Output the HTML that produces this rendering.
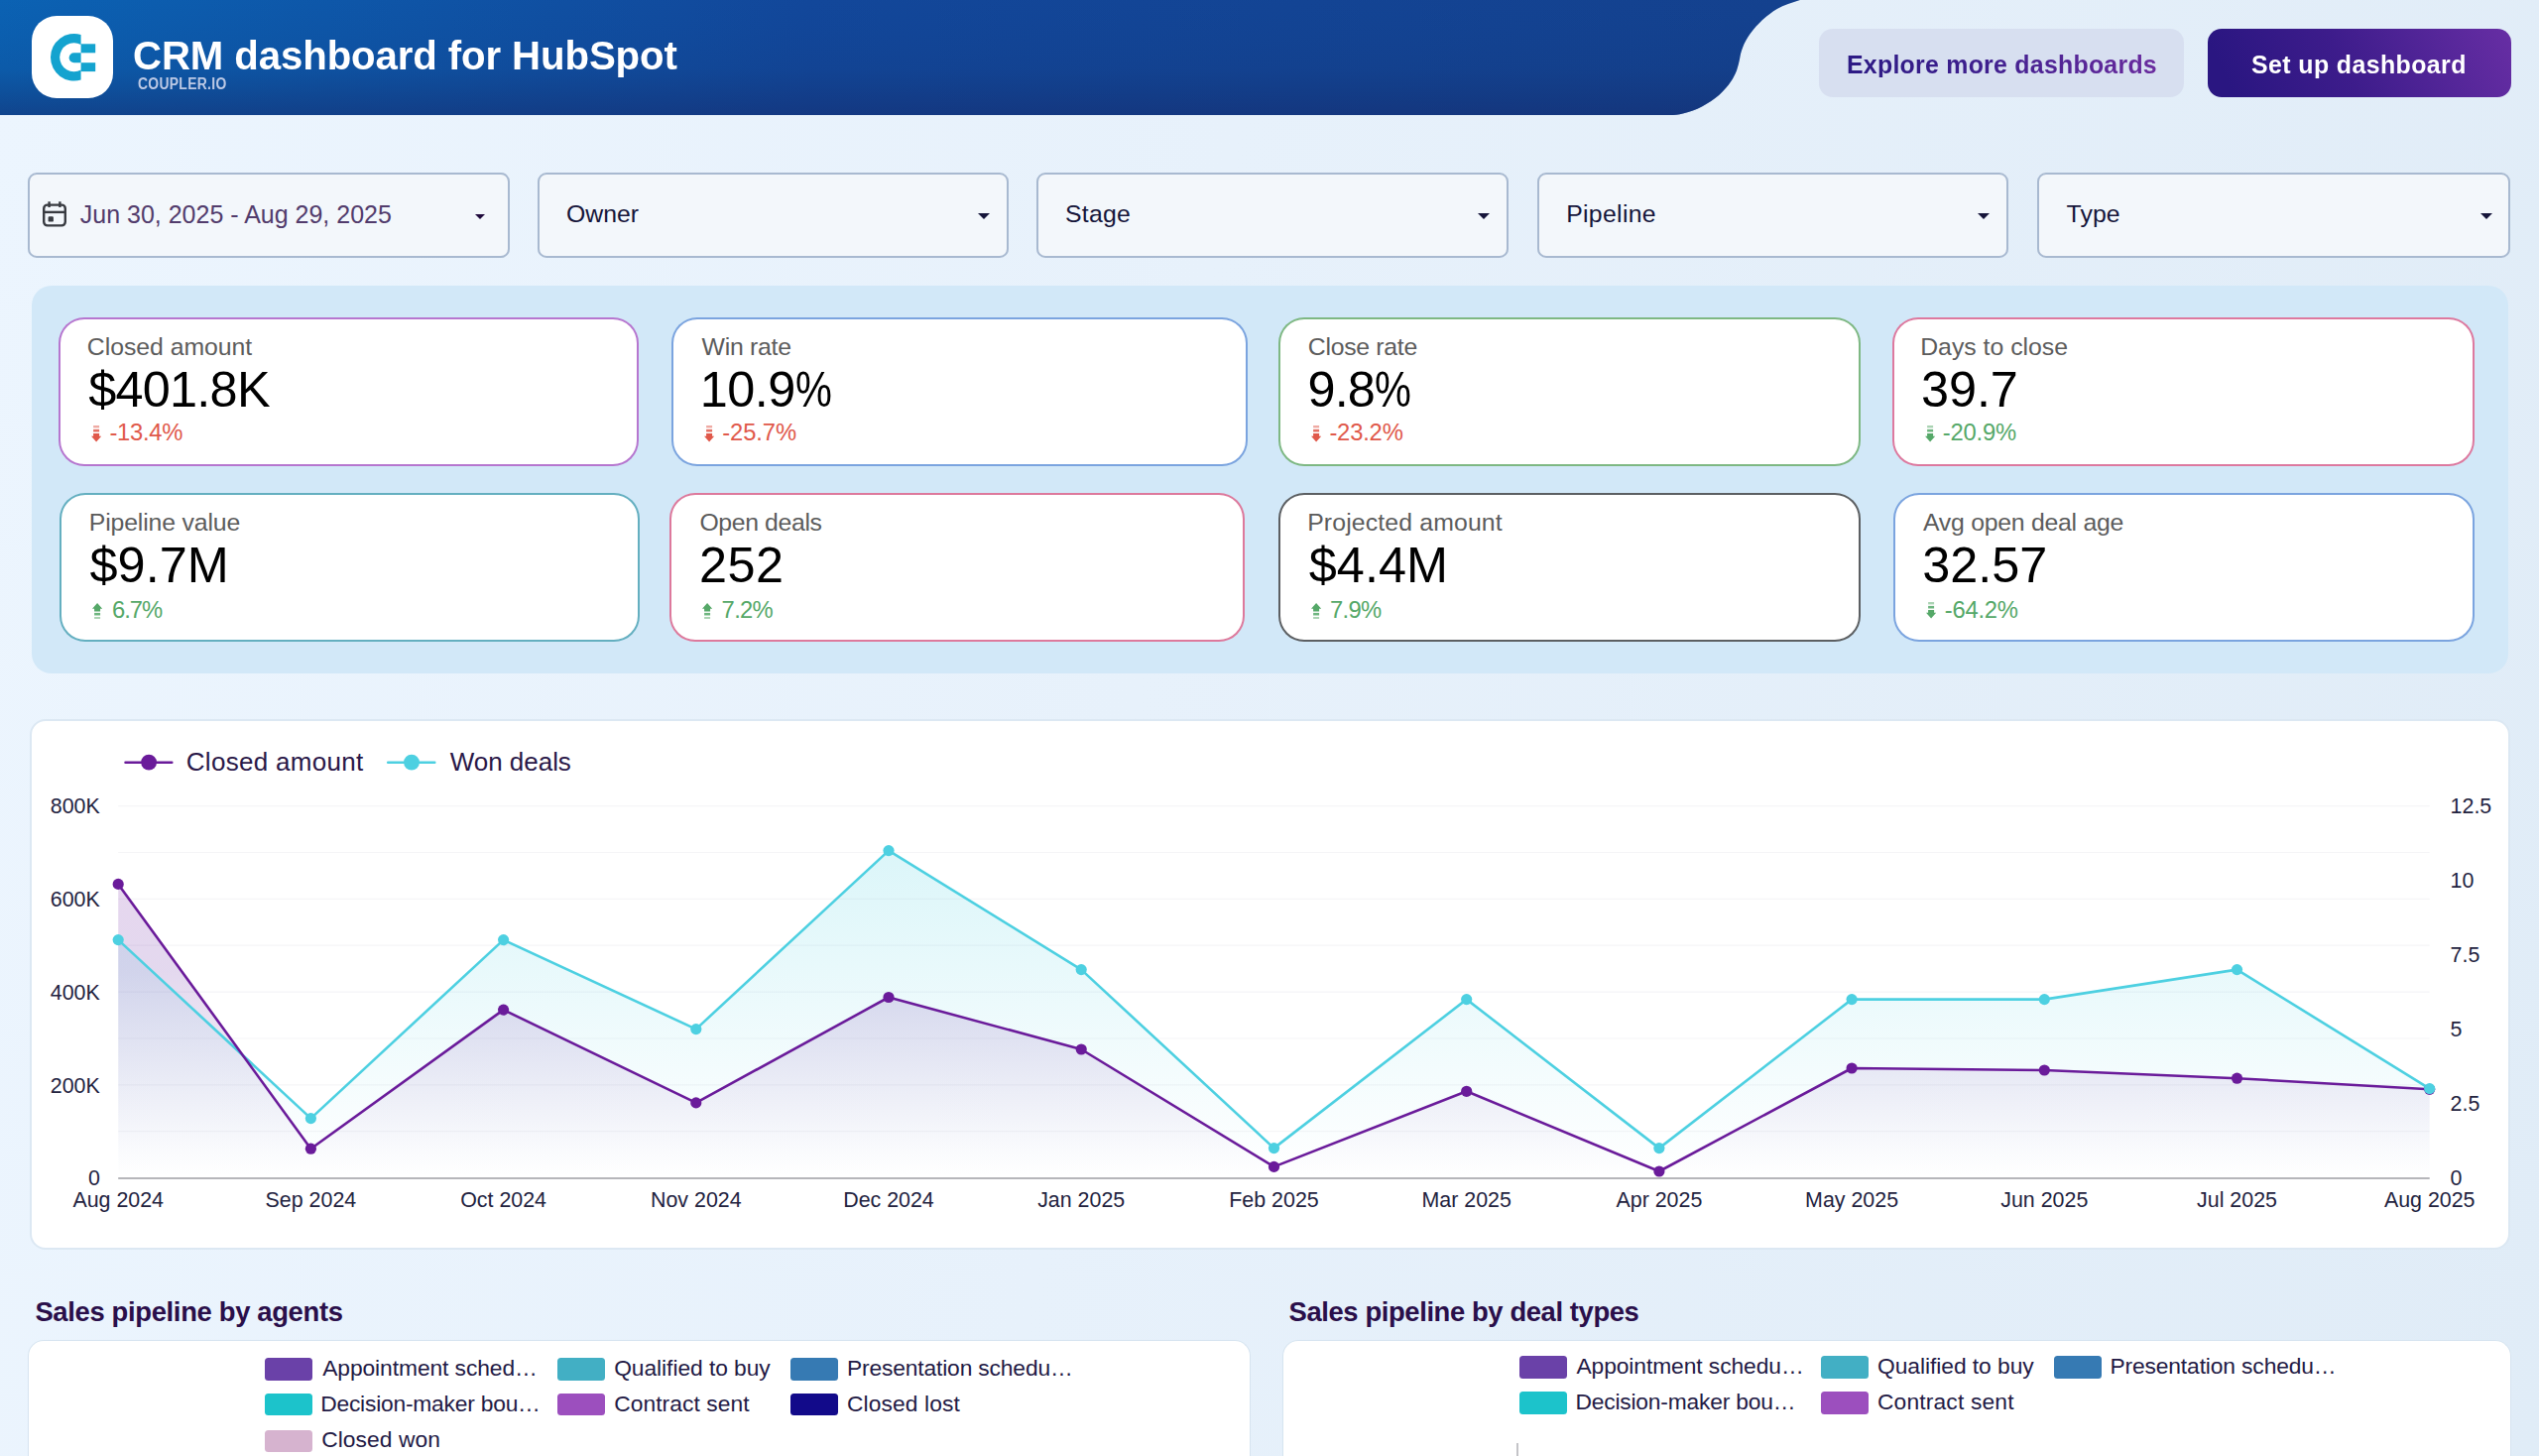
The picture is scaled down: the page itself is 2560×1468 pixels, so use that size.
<!DOCTYPE html>
<html lang="en">
<head>
<meta charset="utf-8">
<title>CRM dashboard for HubSpot</title>
<style>
*{box-sizing:border-box;margin:0;padding:0}
html,body{width:2560px;height:1468px;overflow:hidden}
body{position:relative;font-family:"Liberation Sans",sans-serif;background:linear-gradient(100deg,#ecf5fe 0%,#e7f1fb 45%,#e0ecf7 100%);color:#1a1a3a}
.t{position:absolute;white-space:nowrap;line-height:1}
#hdr{position:absolute;left:0;top:0;width:1840px;height:117px}
#logo{position:absolute;left:31.5px;top:15.5px;width:82px;height:83px;border-radius:25px;background:#fff}
#logo svg{position:absolute;left:0;top:0}
.btn{position:absolute;top:28.5px;height:69.5px;border-radius:14px}
.flt{position:absolute;top:174px;height:86px;border:2px solid #a8b9d0;border-radius:9px;background:#f3f7fb}
.arr{position:absolute;top:214.5px;width:0;height:0;border-left:6px solid transparent;border-right:6px solid transparent;border-top:6.5px solid #15153a}
.fl{color:#15153a}
#kpi{position:absolute;left:31.5px;top:288px;width:2497px;height:390.5px;border-radius:20px;background:#d2e8f8}
.card{position:absolute;background:#fff;border:2px solid #999;border-radius:26px}
.kl{color:#5c5c5c}
.kv{color:#000}
.pc{display:inline-block;transform:scaleX(0.823);transform-origin:0 50%;margin-right:-0.157em}
.ki{position:absolute;width:10.2px;height:16.4px}
.red{color:#e0584a;fill:#e0584a}.grn{color:#55a868;fill:#55a868}
#chart{position:absolute;left:30px;top:725px;width:2501px;height:534.5px;background:#fff;border:2px solid #dce8f3;border-radius:16px}
#csvg{position:absolute;left:0;top:700px;width:2560px;height:580px}
#csvg text{font-family:"Liberation Sans",sans-serif}
.cl{color:#2a1848}
.sec{position:absolute;background:#fff;border:1px solid #d6e4f0;border-radius:16px 16px 0 0;border-bottom:none}
.h2{font-weight:bold;color:#2a0f4a}
.sw{position:absolute;width:48px;height:22.6px;border-radius:3.5px}
.lg{color:#231a45}
</style>
</head>
<body>
<!-- HEADER -->
<svg id="hdr" viewBox="0 0 1840 117">
<defs>
<linearGradient id="hg" x1="0" y1="0" x2="1" y2="0"><stop offset="0" stop-color="#0b62b3"/><stop offset="0.45" stop-color="#12479a"/><stop offset="1" stop-color="#14418e"/></linearGradient>
<linearGradient id="hv" x1="0" y1="0" x2="0" y2="1"><stop offset="0" stop-color="#0a3a8a" stop-opacity="0"/><stop offset="0.6" stop-color="#12306f" stop-opacity="0.15"/><stop offset="1" stop-color="#152c6e" stop-opacity="0.55"/></linearGradient>
</defs>
<path d="M0 0H1815C1807.0 2.6 1798.6 5.0 1791.8 8.9C1785.0 12.8 1778.8 18.4 1773.9 23.2C1769.0 28.0 1765.3 32.9 1762.3 37.5C1759.3 42.1 1757.5 46.7 1756.0 50.9C1754.5 55.1 1754.4 58.6 1753.4 62.5C1752.4 66.4 1751.6 70.2 1749.8 74.1C1748.0 78.0 1746.1 81.5 1742.7 85.7C1739.3 89.9 1734.5 95.1 1729.3 99.1C1724.1 103.1 1717.4 107.1 1711.4 109.8C1705.5 112.5 1698.8 114.2 1693.6 115.2C1688.4 116.2 1685.6 115.9 1680.0 116.0H0Z" fill="url(#hg)"/>
<path d="M0 0H1815C1807.0 2.6 1798.6 5.0 1791.8 8.9C1785.0 12.8 1778.8 18.4 1773.9 23.2C1769.0 28.0 1765.3 32.9 1762.3 37.5C1759.3 42.1 1757.5 46.7 1756.0 50.9C1754.5 55.1 1754.4 58.6 1753.4 62.5C1752.4 66.4 1751.6 70.2 1749.8 74.1C1748.0 78.0 1746.1 81.5 1742.7 85.7C1739.3 89.9 1734.5 95.1 1729.3 99.1C1724.1 103.1 1717.4 107.1 1711.4 109.8C1705.5 112.5 1698.8 114.2 1693.6 115.2C1688.4 116.2 1685.6 115.9 1680.0 116.0H0Z" fill="url(#hv)"/>
</svg>
<div id="logo"><svg width="82" height="83" viewBox="0 0 82 83">
<path d="M49.6 19 A23.8 23.8 0 1 0 49.6 64.6 L49.6 54.55 A14.5 14.5 0 1 1 49.6 29.05 Z" fill="#14a3cf"/>
<path d="M49.6 37.3 H42.6 A4.95 4.95 0 0 0 42.6 47.2 H49.6 Z" fill="#14a3cf"/>
<rect x="49.6" y="28.3" width="14.6" height="9" fill="#14a3cf"/>
<rect x="49.6" y="47.2" width="14.6" height="8.9" fill="#14a3cf"/>
</svg></div>
<div class="t" id="ttl" style="left:134.00px;top:35.54px;font-size:41px;letter-spacing:-0.104px;transform:scaleX(0.98);transform-origin:0 50%;font-weight:bold;color:#fff">CRM dashboard for HubSpot</div>
<div class="t" id="sub" style="left:138.80px;top:77.23px;font-size:15.8px;letter-spacing:0.344px;color:#bcc9e5;font-weight:bold;transform:scaleX(0.88);transform-origin:0 50%">COUPLER.IO</div>
<div class="btn" style="left:1834px;width:368.3px;background:#d7dff0"></div>
<div class="t" id="b1" style="left:1861.60px;top:51.52px;font-size:26.2px;letter-spacing:0.277px;transform:scaleX(0.95);transform-origin:0 50%;font-weight:bold;color:#3a1d8c;background:linear-gradient(90deg,#2c1a84 0%,#3f1f8e 45%,#6a2b9e 100%);-webkit-background-clip:text;background-clip:text;-webkit-text-fill-color:transparent">Explore more dashboards</div>
<div class="btn" style="left:2225.6px;width:306.3px;background:linear-gradient(65deg,#2a1681 8%,#3d1c8b 45%,#672ea4 100%)"></div>
<div class="t" id="b2" style="left:2269.60px;top:51.52px;font-size:26.2px;letter-spacing:0.440px;transform:scaleX(0.95);transform-origin:0 50%;font-weight:bold;color:#fff">Set up dashboard</div>
<!-- FILTERS -->
<div class="flt" style="left:28px;width:486px"></div><div class="arr" style="left:479.1px;top:216px;border-left-width:5.45px;border-right-width:5.45px;border-top-width:5.7px;border-top-color:#1f0a3c"></div>
<div class="flt" style="left:542.3px;width:474.5px"></div><div class="arr" style="left:986.0px"></div>
<div class="flt" style="left:1045px;width:476.2px"></div><div class="arr" style="left:1490.4px"></div>
<div class="flt" style="left:1550px;width:475px"></div><div class="arr" style="left:1994.2px"></div>
<div class="flt" style="left:2054.3px;width:477px"></div><div class="arr" style="left:2500.5px"></div>
<svg style="position:absolute;left:42px;top:202px" width="27" height="28" viewBox="0 0 27 28"><rect x="2.2" y="4.6" width="21.6" height="20.8" rx="3.6" fill="none" stroke="#383b41" stroke-width="2.4"/><path d="M2.2 11.9H23.8" stroke="#383b41" stroke-width="2.4"/><path d="M7.6 1.2V7M18.4 1.2V7" stroke="#383b41" stroke-width="2.4"/><rect x="6.6" y="16.3" width="5.3" height="5.3" rx="1.2" fill="#383b41"/></svg>
<div class="t" id="f0" style="left:80.80px;top:203.94px;font-size:25px;letter-spacing:-0.004px;color:#523c6c">Jun 30, 2025 - Aug 29, 2025</div>
<div class="t fl" id="f1" style="left:571.00px;top:204.21px;font-size:24.8px;letter-spacing:-0.025px;">Owner</div>
<div class="t fl" id="f2" style="left:1074.00px;top:204.21px;font-size:24.8px;letter-spacing:0.250px;">Stage</div>
<div class="t fl" id="f3" style="left:1579.20px;top:204.21px;font-size:24.8px;letter-spacing:0.314px;">Pipeline</div>
<div class="t fl" id="f4" style="left:2083.60px;top:204.21px;font-size:24.8px;letter-spacing:0.100px;">Type</div>
<!-- KPI -->
<div id="kpi"></div>
<div class="card" style="left:59px;top:320px;width:585px;height:150px;border-color:rgba(166,88,196,.82)"></div>
<div class="t kl" id="kl0" style="left:87.80px;top:337.51px;font-size:24.8px;letter-spacing:-0.033px;">Closed amount</div>
<div class="t kv" id="kv0" style="left:89.20px;top:367.64px;font-size:50.4px;letter-spacing:-0.733px;">$401.8K</div>
<svg class="ki red" style="left:91.6px;top:429.2px" viewBox="0 0 10.2 16.4"><path d="M2.1 0H8.1V2.4H2.1Z" opacity="0.5"/><path d="M2.1 3.9H8.1V6.5H2.1Z" opacity="0.85"/><path d="M2.1 7.9H8.1V10.7H10.2L5.1 16.4L0 10.7H2.1Z"/></svg>
<div class="t red" id="kd0" style="left:110.40px;top:424.45px;font-size:23.8px;letter-spacing:-0.260px;">-13.4%</div>
<div class="card" style="left:677px;top:320px;width:581px;height:150px;border-color:rgba(94,144,216,.82)"></div>
<div class="t kl" id="kl1" style="left:707.60px;top:337.51px;font-size:24.8px;letter-spacing:-0.271px;">Win rate</div>
<div class="t kv" id="kv1" style="left:705.80px;top:367.64px;font-size:50.4px;letter-spacing:-0.500px;">10.9<span class="pc">%</span></div>
<svg class="ki red" style="left:710.4px;top:429.2px" viewBox="0 0 10.2 16.4"><path d="M2.1 0H8.1V2.4H2.1Z" opacity="0.5"/><path d="M2.1 3.9H8.1V6.5H2.1Z" opacity="0.85"/><path d="M2.1 7.9H8.1V10.7H10.2L5.1 16.4L0 10.7H2.1Z"/></svg>
<div class="t red" id="kd1" style="left:728.20px;top:424.45px;font-size:23.8px;letter-spacing:-0.080px;">-25.7%</div>
<div class="card" style="left:1289px;top:320px;width:587.4000000000001px;height:150px;border-color:rgba(98,168,104,.82)"></div>
<div class="t kl" id="kl2" style="left:1318.80px;top:337.51px;font-size:24.8px;letter-spacing:-0.289px;">Close rate</div>
<div class="t kv" id="kv2" style="left:1318.60px;top:367.64px;font-size:50.4px;letter-spacing:-0.967px;">9.8<span class="pc">%</span></div>
<svg class="ki red" style="left:1322.1px;top:429.2px" viewBox="0 0 10.2 16.4"><path d="M2.1 0H8.1V2.4H2.1Z" opacity="0.5"/><path d="M2.1 3.9H8.1V6.5H2.1Z" opacity="0.85"/><path d="M2.1 7.9H8.1V10.7H10.2L5.1 16.4L0 10.7H2.1Z"/></svg>
<div class="t red" id="kd2" style="left:1340.40px;top:424.45px;font-size:23.8px;letter-spacing:-0.200px;">-23.2%</div>
<div class="card" style="left:1908px;top:320px;width:587px;height:150px;border-color:rgba(214,92,138,.82)"></div>
<div class="t kl" id="kl3" style="left:1936.20px;top:337.51px;font-size:24.8px;letter-spacing:0.000px;">Days to close</div>
<div class="t kv" id="kv3" style="left:1937.00px;top:367.64px;font-size:50.4px;letter-spacing:-0.083px;">39.7</div>
<svg class="ki grn" style="left:1941.0px;top:429.2px" viewBox="0 0 10.2 16.4"><path d="M2.1 0H8.1V2.4H2.1Z" opacity="0.5"/><path d="M2.1 3.9H8.1V6.5H2.1Z" opacity="0.85"/><path d="M2.1 7.9H8.1V10.7H10.2L5.1 16.4L0 10.7H2.1Z"/></svg>
<div class="t grn" id="kd3" style="left:1958.80px;top:424.45px;font-size:23.8px;letter-spacing:-0.220px;">-20.9%</div>
<div class="card" style="left:60px;top:497.4px;width:585px;height:150.0px;border-color:rgba(66,158,178,.82)"></div>
<div class="t kl" id="kl4" style="left:89.80px;top:514.71px;font-size:24.8px;letter-spacing:-0.154px;">Pipeline value</div>
<div class="t kv" id="kv4" style="left:90.40px;top:544.94px;font-size:50.4px;letter-spacing:0.100px;">$9.7M</div>
<svg class="ki grn" style="left:92.7px;top:608.1px" viewBox="0 0 10.2 16.4"><path d="M2.1 16.4H8.1V14H2.1Z" opacity="0.5"/><path d="M2.1 12.5H8.1V9.9H2.1Z" opacity="0.85"/><path d="M2.1 8.5H8.1V5.7H10.2L5.1 0L0 5.7H2.1Z"/></svg>
<div class="t grn" id="kd4" style="left:113.00px;top:602.55px;font-size:23.8px;letter-spacing:-1.017px;">6.7%</div>
<div class="card" style="left:675.3px;top:497.4px;width:579.7px;height:150.0px;border-color:rgba(214,92,134,.82)"></div>
<div class="t kl" id="kl5" style="left:705.40px;top:514.71px;font-size:24.8px;letter-spacing:-0.367px;">Open deals</div>
<div class="t kv" id="kv5" style="left:705.00px;top:544.94px;font-size:50.4px;letter-spacing:0.450px;">252</div>
<svg class="ki grn" style="left:708.2px;top:608.1px" viewBox="0 0 10.2 16.4"><path d="M2.1 16.4H8.1V14H2.1Z" opacity="0.5"/><path d="M2.1 12.5H8.1V9.9H2.1Z" opacity="0.85"/><path d="M2.1 8.5H8.1V5.7H10.2L5.1 0L0 5.7H2.1Z"/></svg>
<div class="t grn" id="kd5" style="left:727.60px;top:602.55px;font-size:23.8px;letter-spacing:-0.700px;">7.2%</div>
<div class="card" style="left:1289px;top:497.4px;width:587px;height:150.0px;border-color:rgba(70,73,76,.88)"></div>
<div class="t kl" id="kl6" style="left:1318.20px;top:514.71px;font-size:24.8px;letter-spacing:0.140px;">Projected amount</div>
<div class="t kv" id="kv6" style="left:1319.80px;top:544.94px;font-size:50.4px;letter-spacing:0.025px;">$4.4M</div>
<svg class="ki grn" style="left:1322.1px;top:608.1px" viewBox="0 0 10.2 16.4"><path d="M2.1 16.4H8.1V14H2.1Z" opacity="0.5"/><path d="M2.1 12.5H8.1V9.9H2.1Z" opacity="0.85"/><path d="M2.1 8.5H8.1V5.7H10.2L5.1 0L0 5.7H2.1Z"/></svg>
<div class="t grn" id="kd6" style="left:1341.00px;top:602.55px;font-size:23.8px;letter-spacing:-0.700px;">7.9%</div>
<div class="card" style="left:1909.4px;top:497.4px;width:585.5999999999999px;height:150.0px;border-color:rgba(94,144,216,.82)"></div>
<div class="t kl" id="kl7" style="left:1939.00px;top:514.71px;font-size:24.8px;letter-spacing:-0.250px;">Avg open deal age</div>
<div class="t kv" id="kv7" style="left:1938.20px;top:544.94px;font-size:50.4px;letter-spacing:0.000px;">32.57</div>
<svg class="ki grn" style="left:1942.1px;top:607.2px" viewBox="0 0 10.2 16.4"><path d="M2.1 0H8.1V2.4H2.1Z" opacity="0.5"/><path d="M2.1 3.9H8.1V6.5H2.1Z" opacity="0.85"/><path d="M2.1 7.9H8.1V10.7H10.2L5.1 16.4L0 10.7H2.1Z"/></svg>
<div class="t grn" id="kd7" style="left:1960.80px;top:602.55px;font-size:23.8px;letter-spacing:-0.260px;">-64.2%</div>
<!-- CHART -->
<div id="chart"></div>
<svg id="csvg" viewBox="0 0 2560 580">
<defs><linearGradient id="gp" gradientUnits="userSpaceOnUse" x1="0" y1="191" x2="0" y2="487.5999999999999"><stop offset="0" stop-color="#7a2aa8" stop-opacity="0.19"/><stop offset="0.3" stop-color="#6e34a8" stop-opacity="0.19"/><stop offset="0.92" stop-color="#7a3aa8" stop-opacity="0.015"/><stop offset="1" stop-color="#7a3aa8" stop-opacity="0"/></linearGradient>
<linearGradient id="gc" gradientUnits="userSpaceOnUse" x1="0" y1="157" x2="0" y2="487.5999999999999"><stop offset="0" stop-color="#4dd0e1" stop-opacity="0.2"/><stop offset="1" stop-color="#4dd0e1" stop-opacity="0"/></linearGradient></defs>
<path d="M119.2 440.7H2449.7" stroke="#f5f5f7" stroke-width="1.2"/>
<path d="M119.2 393.8H2449.7" stroke="#f5f5f7" stroke-width="1.2"/>
<path d="M119.2 347.0H2449.7" stroke="#f5f5f7" stroke-width="1.2"/>
<path d="M119.2 300.1H2449.7" stroke="#f5f5f7" stroke-width="1.2"/>
<path d="M119.2 253.2H2449.7" stroke="#f5f5f7" stroke-width="1.2"/>
<path d="M119.2 206.4H2449.7" stroke="#f5f5f7" stroke-width="1.2"/>
<path d="M119.2 159.5H2449.7" stroke="#f5f5f7" stroke-width="1.2"/>
<path d="M119.2 112.6H2449.7" stroke="#f5f5f7" stroke-width="1.2"/>
<path d="M119.2,487.6 L119.2,247.6 L313.4,427.6 L507.6,247.6 L701.8,337.6 L896.0,157.6 L1090.2,277.6 L1284.5,457.6 L1478.7,307.6 L1672.9,457.6 L1867.1,307.6 L2061.3,307.6 L2255.5,277.6 L2449.7,397.6 L2449.7,487.6Z" fill="url(#gc)"/>
<path d="M119.2,487.6 L119.2,191.4 L313.4,458.2 L507.6,318.1 L701.8,411.9 L896.0,305.5 L1090.2,358.0 L1284.5,476.4 L1478.7,400.3 L1672.9,481.0 L1867.1,377.0 L2061.3,379.0 L2255.5,387.2 L2449.7,398.3 L2449.7,487.6Z" fill="url(#gp)"/>
<path d="M119.2 488.0H2449.7" stroke="#b6b6ba" stroke-width="2.2"/>
<polyline points="119.2,247.6 313.4,427.6 507.6,247.6 701.8,337.6 896.0,157.6 1090.2,277.6 1284.5,457.6 1478.7,307.6 1672.9,457.6 1867.1,307.6 2061.3,307.6 2255.5,277.6 2449.7,397.6" fill="none" stroke="#4dd0e1" stroke-width="2.6" stroke-linejoin="round"/>
<polyline points="119.2,191.4 313.4,458.2 507.6,318.1 701.8,411.9 896.0,305.5 1090.2,358.0 1284.5,476.4 1478.7,400.3 1672.9,481.0 1867.1,377.0 2061.3,379.0 2255.5,387.2 2449.7,398.3" fill="none" stroke="#6a1b9a" stroke-width="2.6" stroke-linejoin="round"/>
<circle cx="119.2" cy="191.4" r="5.6" fill="#6a1b9a" />
<circle cx="313.4" cy="458.2" r="5.6" fill="#6a1b9a" />
<circle cx="507.6" cy="318.1" r="5.6" fill="#6a1b9a" />
<circle cx="701.8" cy="411.9" r="5.6" fill="#6a1b9a" />
<circle cx="896.0" cy="305.5" r="5.6" fill="#6a1b9a" />
<circle cx="1090.2" cy="358.0" r="5.6" fill="#6a1b9a" />
<circle cx="1284.5" cy="476.4" r="5.6" fill="#6a1b9a" />
<circle cx="1478.7" cy="400.3" r="5.6" fill="#6a1b9a" />
<circle cx="1672.9" cy="481.0" r="5.6" fill="#6a1b9a" />
<circle cx="1867.1" cy="377.0" r="5.6" fill="#6a1b9a" />
<circle cx="2061.3" cy="379.0" r="5.6" fill="#6a1b9a" />
<circle cx="2255.5" cy="387.2" r="5.6" fill="#6a1b9a" />
<circle cx="2449.7" cy="398.3" r="5.6" fill="#6a1b9a" />
<circle cx="119.2" cy="247.6" r="5.6" fill="#4dd0e1" />
<circle cx="313.4" cy="427.6" r="5.6" fill="#4dd0e1" />
<circle cx="507.6" cy="247.6" r="5.6" fill="#4dd0e1" />
<circle cx="701.8" cy="337.6" r="5.6" fill="#4dd0e1" />
<circle cx="896.0" cy="157.6" r="5.6" fill="#4dd0e1" />
<circle cx="1090.2" cy="277.6" r="5.6" fill="#4dd0e1" />
<circle cx="1284.5" cy="457.6" r="5.6" fill="#4dd0e1" />
<circle cx="1478.7" cy="307.6" r="5.6" fill="#4dd0e1" />
<circle cx="1672.9" cy="457.6" r="5.6" fill="#4dd0e1" />
<circle cx="1867.1" cy="307.6" r="5.6" fill="#4dd0e1" />
<circle cx="2061.3" cy="307.6" r="5.6" fill="#4dd0e1" />
<circle cx="2255.5" cy="277.6" r="5.6" fill="#4dd0e1" />
<circle cx="2449.7" cy="397.6" r="5.6" fill="#4dd0e1" />
<path d="M126.5 68.7H173.3" stroke="#6a1b9a" stroke-width="2.5" stroke-linecap="round"/><circle cx="150.1" cy="68.7" r="7.9" fill="#6a1b9a"/>
<path d="M391.2 68.7H438.3" stroke="#4dd0e1" stroke-width="2.5" stroke-linecap="round"/><circle cx="415" cy="68.7" r="7.9" fill="#4dd0e1"/>
<text x="100.8" y="495.3" font-size="21.4" text-anchor="end" fill="#23233f">0</text>
<text x="100.8" y="401.5" font-size="21.4" text-anchor="end" fill="#23233f">200K</text>
<text x="100.8" y="307.8" font-size="21.4" text-anchor="end" fill="#23233f">400K</text>
<text x="100.8" y="214.1" font-size="21.4" text-anchor="end" fill="#23233f">600K</text>
<text x="100.8" y="120.3" font-size="21.4" text-anchor="end" fill="#23233f">800K</text>
<text x="2470.6" y="495.3" font-size="21.4" fill="#23233f">0</text>
<text x="2470.6" y="420.3" font-size="21.4" fill="#23233f">2.5</text>
<text x="2470.6" y="345.3" font-size="21.4" fill="#23233f">5</text>
<text x="2470.6" y="270.3" font-size="21.4" fill="#23233f">7.5</text>
<text x="2470.6" y="195.3" font-size="21.4" fill="#23233f">10</text>
<text x="2470.6" y="120.3" font-size="21.4" fill="#23233f">12.5</text>
<text x="119.2" y="517.0" font-size="21.4" text-anchor="middle" fill="#23233f">Aug 2024</text>
<text x="313.4" y="517.0" font-size="21.4" text-anchor="middle" fill="#23233f">Sep 2024</text>
<text x="507.6" y="517.0" font-size="21.4" text-anchor="middle" fill="#23233f">Oct 2024</text>
<text x="701.8" y="517.0" font-size="21.4" text-anchor="middle" fill="#23233f">Nov 2024</text>
<text x="896.0" y="517.0" font-size="21.4" text-anchor="middle" fill="#23233f">Dec 2024</text>
<text x="1090.2" y="517.0" font-size="21.4" text-anchor="middle" fill="#23233f">Jan 2025</text>
<text x="1284.5" y="517.0" font-size="21.4" text-anchor="middle" fill="#23233f">Feb 2025</text>
<text x="1478.7" y="517.0" font-size="21.4" text-anchor="middle" fill="#23233f">Mar 2025</text>
<text x="1672.9" y="517.0" font-size="21.4" text-anchor="middle" fill="#23233f">Apr 2025</text>
<text x="1867.1" y="517.0" font-size="21.4" text-anchor="middle" fill="#23233f">May 2025</text>
<text x="2061.3" y="517.0" font-size="21.4" text-anchor="middle" fill="#23233f">Jun 2025</text>
<text x="2255.5" y="517.0" font-size="21.4" text-anchor="middle" fill="#23233f">Jul 2025</text>
<text x="2449.7" y="517.0" font-size="21.4" text-anchor="middle" fill="#23233f">Aug 2025</text>
</svg>
<div class="t cl" id="lg1" style="left:187.80px;top:754.99px;font-size:26px;letter-spacing:0.300px;">Closed amount</div>
<div class="t cl" id="lg2" style="left:453.80px;top:754.99px;font-size:26px;letter-spacing:-0.037px;">Won deals</div>
<!-- SECTIONS -->
<div class="t h2" id="h2a" style="left:35.40px;top:1309.11px;font-size:27.4px;letter-spacing:-0.330px;">Sales pipeline by agents</div>
<div class="t h2" id="h2b" style="left:1299.60px;top:1309.11px;font-size:27.4px;letter-spacing:-0.393px;">Sales pipeline by deal types</div>
<div class="sec" style="left:28px;top:1351px;width:1233px;height:130px"></div>
<div class="sec" style="left:1293px;top:1351px;width:1239px;height:130px"></div>
<div class="sw" style="left:267px;top:1369.1px;background:#6a41a8"></div><div class="t lg" id="la00" style="left:325.20px;top:1368.30px;font-size:22.8px;letter-spacing:-0.076px;">Appointment sched…</div>
<div class="sw" style="left:562.4px;top:1369.1px;background:#42afc4"></div><div class="t lg" id="la01" style="left:619.20px;top:1368.30px;font-size:22.8px;letter-spacing:-0.060px;">Qualified to buy</div>
<div class="sw" style="left:797px;top:1369.1px;background:#367ab3"></div><div class="t lg" id="la02" style="left:854.00px;top:1368.30px;font-size:22.8px;letter-spacing:-0.153px;">Presentation schedu…</div>
<div class="sw" style="left:267px;top:1404.6px;background:#1cc3cb"></div><div class="t lg" id="la10" style="left:323.20px;top:1403.80px;font-size:22.8px;letter-spacing:-0.211px;">Decision-maker bou…</div>
<div class="sw" style="left:562.4px;top:1404.6px;background:#9c4fbe"></div><div class="t lg" id="la11" style="left:619.20px;top:1403.80px;font-size:22.8px;letter-spacing:0.058px;">Contract sent</div>
<div class="sw" style="left:797px;top:1404.6px;background:#120a8a"></div><div class="t lg" id="la12" style="left:854.00px;top:1403.80px;font-size:22.8px;letter-spacing:0.110px;">Closed lost</div>
<div class="sw" style="left:267px;top:1441.5px;background:#d6b3cf"></div><div class="t lg" id="la20" style="left:324.20px;top:1439.90px;font-size:22.8px;letter-spacing:0.067px;">Closed won</div>
<div class="sw" style="left:1531.8px;top:1367.2px;background:#6a41a8"></div><div class="t lg" id="lb00" style="left:1589.40px;top:1366.40px;font-size:22.8px;letter-spacing:-0.072px;">Appointment schedu…</div>
<div class="sw" style="left:1836px;top:1367.2px;background:#42afc4"></div><div class="t lg" id="lb01" style="left:1893.00px;top:1366.40px;font-size:22.8px;letter-spacing:-0.047px;">Qualified to buy</div>
<div class="sw" style="left:2070.8px;top:1367.2px;background:#367ab3"></div><div class="t lg" id="lb02" style="left:2127.40px;top:1366.40px;font-size:22.8px;letter-spacing:-0.126px;">Presentation schedu…</div>
<div class="sw" style="left:1531.8px;top:1403.1px;background:#1cc3cb"></div><div class="t lg" id="lb10" style="left:1588.40px;top:1402.10px;font-size:22.8px;letter-spacing:-0.183px;">Decision-maker bou…</div>
<div class="sw" style="left:1836px;top:1403.1px;background:#9c4fbe"></div><div class="t lg" id="lb11" style="left:1893.00px;top:1402.10px;font-size:22.8px;letter-spacing:0.158px;">Contract sent</div>
<div style="position:absolute;left:1528.8px;top:1455.2px;width:2.2px;height:20px;background:#c4c4c8"></div>
</body>
</html>
